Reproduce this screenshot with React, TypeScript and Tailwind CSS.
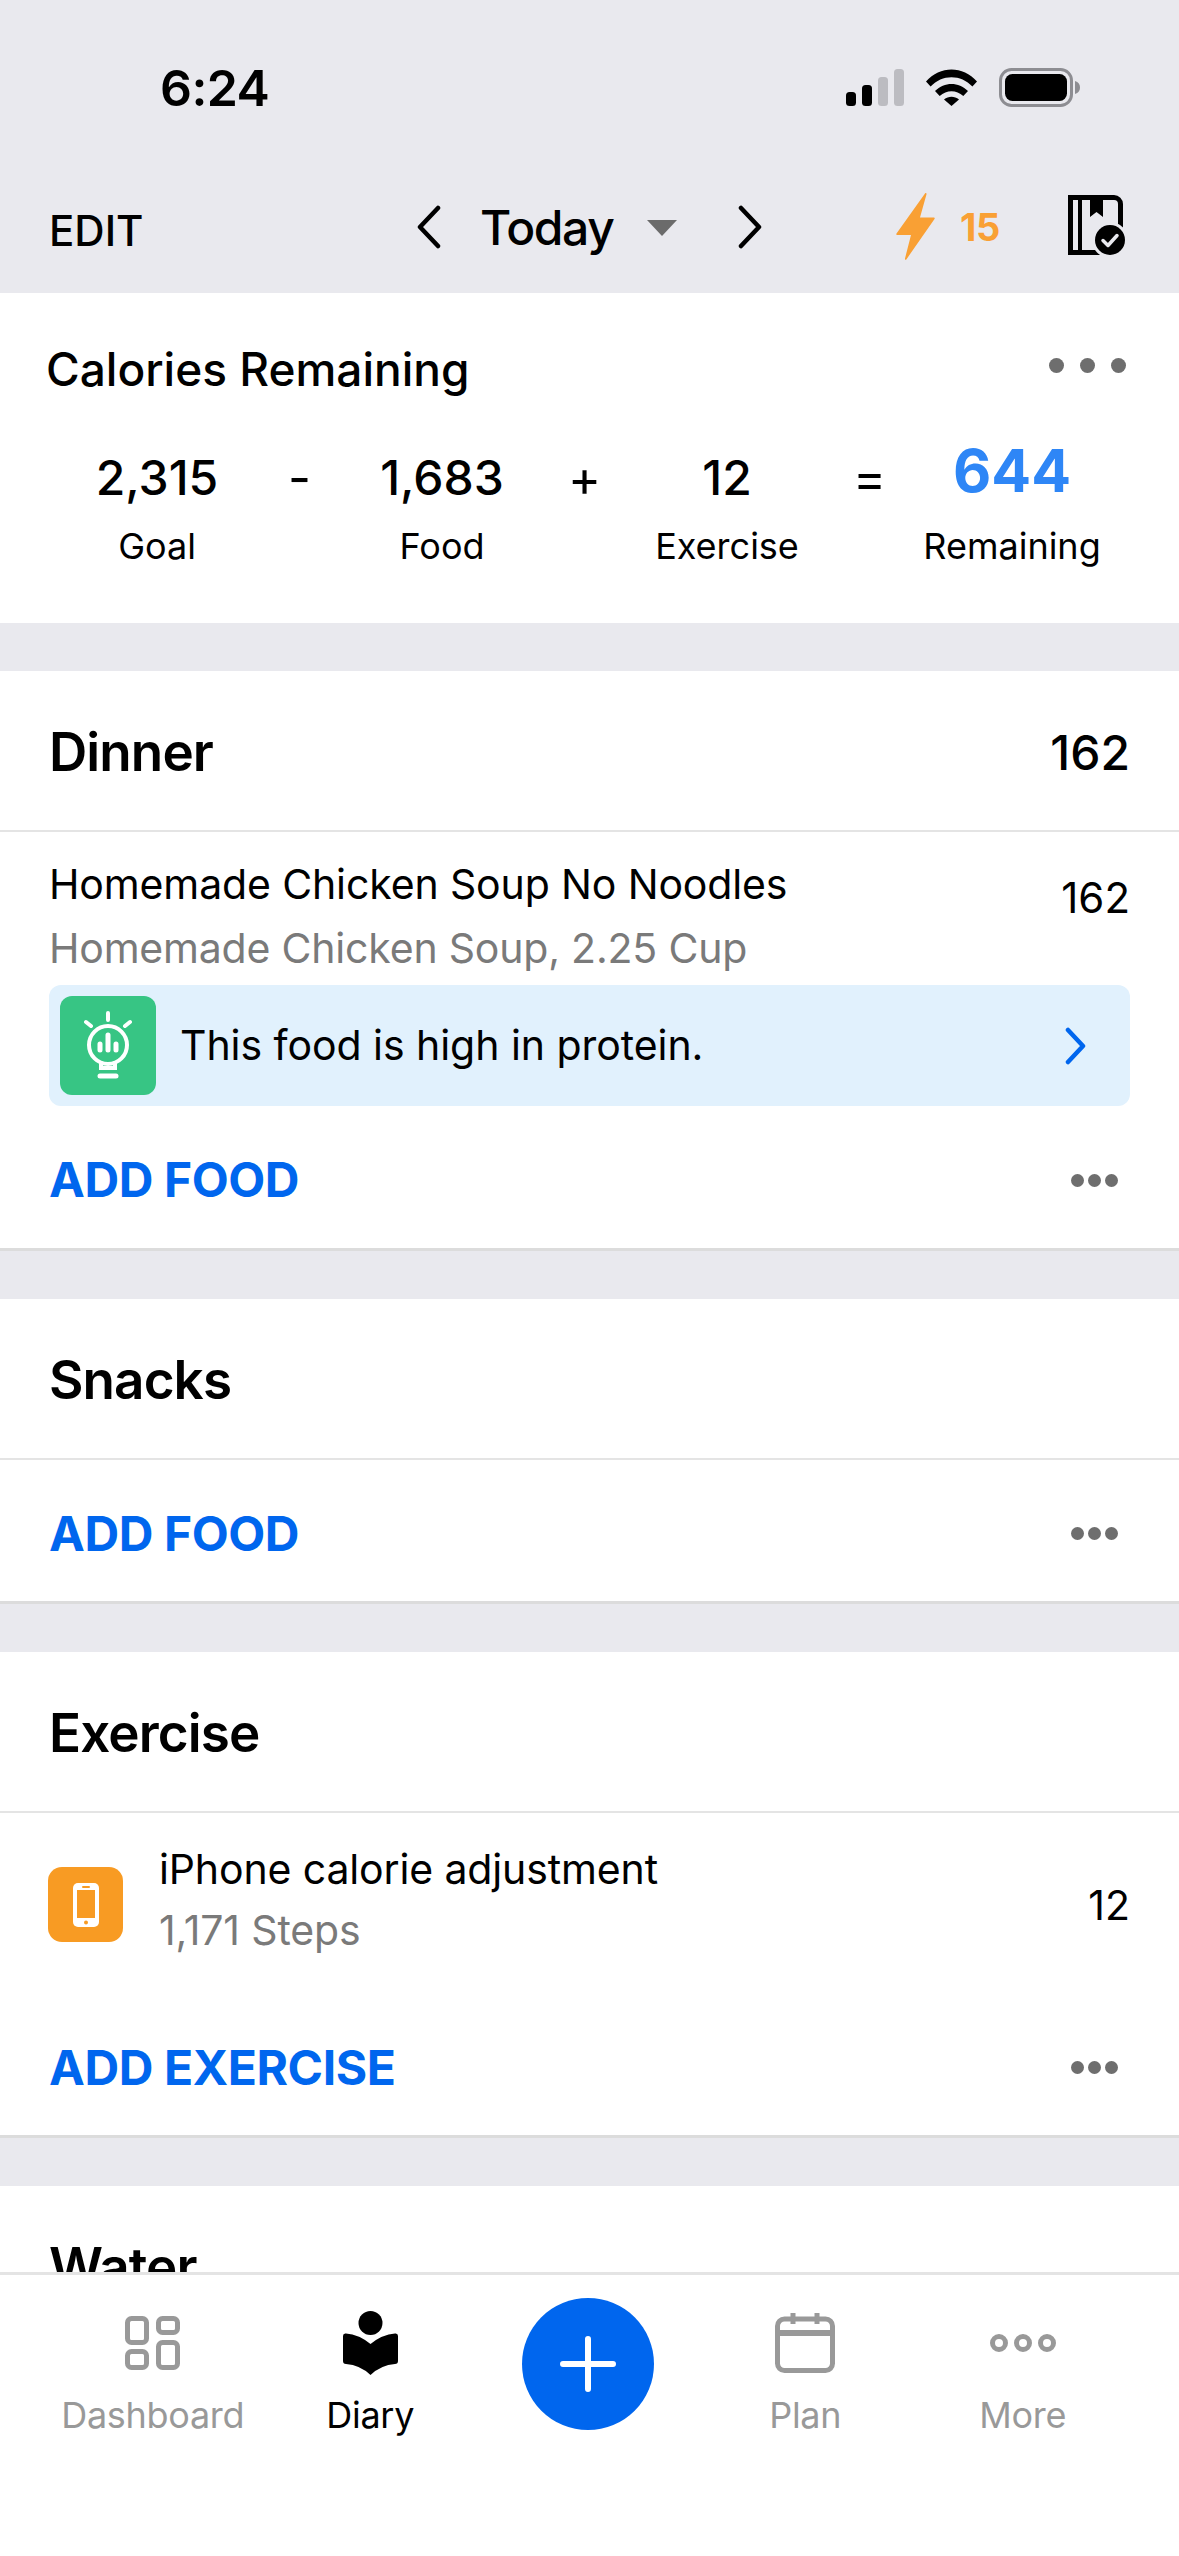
import React from "react";

const Dots = () => (
  <div className="flex items-center gap-[4px] mr-[12px]">
    <span className="w-[13px] h-[13px] rounded-full bg-[#6e6e6e]" />
    <span className="w-[13px] h-[13px] rounded-full bg-[#6e6e6e]" />
    <span className="w-[13px] h-[13px] rounded-full bg-[#6e6e6e]" />
  </div>
);

const SectionHeader = ({ title, value }: { title: string; value?: string }) => (
  <div className="h-[161px] flex items-center justify-between pl-[49px] pr-[49px] pt-[4px] border-b-2 border-[#e4e4e4]">
    <span className="text-[53px] font-semibold tracking-[-0.9px] text-black">{title}</span>
    {value && <span className="text-[48px] font-medium text-black">{value}</span>}
  </div>
);

const AddRow = ({ label }: { label: string }) => (
  <div className="h-[144px] flex items-center justify-between pl-[49px] pr-[49px] pt-[6px] border-b-[3px] border-[#dcdcdc]">
    <span className="text-[48px] font-bold tracking-[-0.4px] text-[#0066ee]">{label}</span>
    <Dots />
  </div>
);

const SectionGap = () => <div className="h-[48px] bg-[#e9e9ee]" />;

const Stat = ({ value, label, blue }: { value: string; label: string; blue?: boolean }) => (
  <div className="w-[200px] flex flex-col items-center">
    <div className="h-[76px] flex items-center">
      {blue ? (
        <span className="text-[59px] font-bold text-[#2e86f6] -mt-[14px]">{value}</span>
      ) : (
        <span className="text-[48px] font-medium text-black">{value}</span>
      )}
    </div>
    <span className="mt-[8px] text-[36px] leading-[44px] text-black">{label}</span>
  </div>
);

const Operator = ({ sign }: { sign: string }) => (
  <div className="w-[85px] h-[76px] flex items-center justify-center text-[50px] text-black">{sign}</div>
);

const TabItem = ({ label, active, icon }: { label: string; active?: boolean; icon: React.ReactNode }) => (
  <div className="w-[217.5px] flex flex-col items-center">
    <div className="h-[70px] flex items-center justify-center">{icon}</div>
    <span className={`mt-[15px] text-[36px] leading-[44px] tracking-[-0.3px] ${active ? "text-black" : "text-[#999999]"}`}>{label}</span>
  </div>
);

export default function App() {
  return (
    <div className="w-[1179px] h-[2556px] flex flex-col overflow-hidden bg-white [font-family:Inter,sans-serif]">
      {/* top bars */}
      <div className="h-[293px] bg-[#e9e9ee] shrink-0">
        <div className="h-[176px] flex items-start justify-between">
          <span className="ml-[160px] mt-[58px] text-[50px] leading-[60px] font-semibold tracking-[-0.6px] text-black">6:24</span>
          <div className="mt-[68px] mr-[98px] flex items-center gap-[22px]">
            <svg width="58" height="37" viewBox="0 0 58 37">
              <rect x="0" y="23" width="10" height="14" rx="3.5" fill="#000" />
              <rect x="16" y="16" width="10" height="21" rx="3.5" fill="#000" />
              <rect x="32" y="8" width="10" height="29" rx="3.5" fill="#bcbcc1" />
              <rect x="48" y="0" width="10" height="37" rx="3.5" fill="#bcbcc1" />
            </svg>
            <svg width="51" height="37" viewBox="0 0 51 37">
              <path d="M0 12.5C14-3.5 37-3.5 51 12.5l-4.6 5C35 5 16 5 4.6 17.500z" fill="#000" />
              <path d="M9 22c9.500-9.500 23.500-9.500 33 0l-4.700 5c-7-6.500-16.600-6.500-23.600 0z" fill="#000" />
              <path d="M18 30.500c4.500-3.800 10.500-3.800 15 0L25.500 37z" fill="#000" />
            </svg>
            <svg width="82" height="39" viewBox="0 0 82 39">
              <rect x="1.500" y="1.500" width="71" height="36" rx="11" fill="none" stroke="#8d8d92" strokeWidth="3" />
              <rect x="6" y="6" width="62" height="27" rx="7.500" fill="#000" />
              <path d="M76 13c3.500 1 5 3.500 5 6.500s-1.500 5.500-5 6.500z" fill="#8d8d92" />
            </svg>
          </div>
        </div>
        <div className="h-[117px] flex items-start">
          <span className="ml-[49px] mt-[30px] w-[367px] text-[42px] leading-[50px] font-medium text-black">EDIT</span>
          <svg className="mt-[29px]" width="25" height="44" viewBox="0 0 25 44" fill="none" stroke="#000" strokeWidth="4.500" strokeLinecap="round" strokeLinejoin="round">
            <path d="M22 3 4 22l18 19" />
          </svg>
          <span className="ml-[39px] mt-[23px] w-[133px] text-[48px] leading-[58px] font-medium tracking-[-1.4px] text-black">Today</span>
          <svg className="ml-[34px] mt-[44px]" width="30" height="16" viewBox="0 0 30 16">
            <path d="M0 0h30L15 16z" fill="#6b6b6b" />
          </svg>
          <svg className="ml-[61px] mt-[29px]" width="25" height="44" viewBox="0 0 25 44" fill="none" stroke="#000" strokeWidth="4.500" strokeLinecap="round" strokeLinejoin="round">
            <path d="M3 3l18 19L3 41" />
          </svg>
          <svg className="ml-[133px] mt-[17px]" width="39" height="67" viewBox="0 0 39 67">
            <path d="M29 0.500 0.500 40.500c-.6 1-.1 1.500 1 1.500H15L9 65.500c-.3 1.300.8 1.700 1.500.7L38.500 26c.6-1 .1-1.500-1-1.500H24L30.500 1.300c.3-1.200-.8-1.600-1.500-.8z" fill="#f9a034" />
          </svg>
          <span className="ml-[25px] mt-[29px] w-[39px] text-[38px] leading-[44px] font-bold tracking-[-0.4px] text-[#f9a034]">15</span>
          <svg className="ml-[69px] mt-[19px]" width="58" height="62" viewBox="0 0 58 62">
            <path d="M0 0h46a9 9 0 0 1 9 9v42H40v9H0z" fill="#000" />
            <rect x="5" y="5" width="5" height="50" fill="#e9e9ee" />
            <path d="M14 5h8v17l6.500-5 6.500 5V5h11a4 4 0 0 1 4 4v46H14z" fill="#e9e9ee" />
            <circle cx="42" cy="45" r="18" fill="#e9e9ee" />
            <circle cx="42" cy="45" r="15" fill="#000" />
            <path d="M35 45.500l5 5 9-10" fill="none" stroke="#e9e9ee" strokeWidth="3.500" strokeLinecap="round" strokeLinejoin="round" />
          </svg>
        </div>
      </div>

      {/* scrolling diary */}
      <div className="flex-1 overflow-hidden bg-[#e9e9ee]">
        <div className="h-[330px] bg-white">
          <div className="flex items-center justify-between pl-[46px] pr-[53px] pt-[46px]">
            <span className="text-[46px] leading-[60px] font-medium text-black">Calories Remaining</span>
            <div className="flex items-center gap-[16px] -mt-[8px]">
              <span className="w-[15px] h-[15px] rounded-full bg-[#6e6e6e]" />
              <span className="w-[15px] h-[15px] rounded-full bg-[#6e6e6e]" />
              <span className="w-[15px] h-[15px] rounded-full bg-[#6e6e6e]" />
            </div>
          </div>
          <div className="flex items-start pl-[57px] mt-[41px]">
            <Stat value="2,315" label="Goal" />
            <Operator sign="-" />
            <Stat value="1,683" label="Food" />
            <Operator sign="+" />
            <Stat value="12" label="Exercise" />
            <Operator sign="=" />
            <Stat value="644" label="Remaining" blue />
          </div>
        </div>
        <SectionGap />

        <div className="bg-white">
          <SectionHeader title="Dinner" value="162" />
          <div className="flex items-start justify-between pl-[49px] pr-[49px] h-[153px]">
            <div className="flex flex-col">
              <span className="mt-[27px] text-[41px] leading-[50px] tracking-[-0.13px] text-black">Homemade Chicken Soup No Noodles</span>
              <span className="mt-[14px] text-[41px] leading-[50px] tracking-[-0.2px] text-[#7a7a7a]">Homemade Chicken Soup, 2.25 Cup</span>
            </div>
            <span className="mt-[41px] text-[42px] leading-[50px] text-black">162</span>
          </div>
          <div className="mx-[49px] h-[121px] rounded-[12px] bg-[#e1f1fd] flex items-center pl-[11px] pr-[43px]">
            <div className="w-[96px] h-[99px] rounded-[12px] bg-[#37c584] flex items-center justify-center">
              <svg width="50" height="70" viewBox="0 0 50 70" fill="none" stroke="#fff" strokeWidth="4" strokeLinecap="round">
                <path d="M25 2v7M3 11l5 4M47 11l-5 4" />
                <circle cx="25" cy="34" r="19" />
                <path d="M18 52v5h14v-5" />
                <path d="M17 65h16" strokeWidth="5" />
                <path d="M25 24v15M17 33v6M33 33v6" strokeWidth="5" />
              </svg>
            </div>
            <span className="ml-[24px] flex-1 text-[41px] tracking-[-0.05px] text-black">This food is high in protein.</span>
            <svg width="24" height="38" viewBox="0 0 24 38" fill="none" stroke="#0066ee" strokeWidth="4.500" strokeLinecap="round" strokeLinejoin="round">
              <path d="M5 3l15 16L5 35" />
            </svg>
          </div>
          <div className="h-[145px] flex items-center justify-between pl-[49px] pr-[49px] pt-[6px] border-b-[3px] border-[#dcdcdc]">
            <span className="text-[48px] font-bold tracking-[-0.4px] text-[#0066ee]">ADD FOOD</span>
            <Dots />
          </div>
        </div>
        <SectionGap />

        <div className="bg-white">
          <SectionHeader title="Snacks" />
          <AddRow label="ADD FOOD" />
        </div>
        <SectionGap />

        <div className="bg-white">
          <SectionHeader title="Exercise" />
          <div className="h-[181px] flex items-start pl-[48px] pr-[49px]">
            <div className="mt-[54px] w-[75px] h-[75px] rounded-[14px] bg-[#f89b23] flex items-center justify-center">
              <svg width="26" height="44" viewBox="0 0 26 44">
                <rect x="0" y="0" width="26" height="44" rx="5" fill="#fff" />
                <rect x="4" y="7" width="18" height="28" fill="#f89b23" />
                <rect x="9" y="3" width="8" height="2" rx="1" fill="#f89b23" />
                <circle cx="13" cy="39.500" r="2" fill="#f89b23" />
              </svg>
            </div>
            <div className="ml-[36px] flex-1 flex flex-col">
              <span className="mt-[31px] text-[41px] leading-[50px] tracking-[-0.13px] text-black">iPhone calorie adjustment</span>
              <span className="mt-[11px] text-[41px] leading-[50px] tracking-[-0.13px] text-[#7a7a7a]">1,171 Steps</span>
            </div>
            <span className="mt-[67px] text-[41px] leading-[50px] text-black">12</span>
          </div>
          <AddRow label="ADD EXERCISE" />
        </div>
        <SectionGap />

        <div className="bg-white">
          <SectionHeader title="Water" />
        </div>
      </div>

      {/* tab bar */}
      <div className="h-[284px] shrink-0 bg-white border-t-[3px] border-[#e4e4e4] flex items-start pl-[44px] pt-[33px]">
        <TabItem
          label="Dashboard"
          icon={
            <svg width="55" height="54" viewBox="0 0 55 54" fill="none" stroke="#999" strokeWidth="5">
              <rect x="2.500" y="2.500" width="19" height="24" rx="4" />
              <rect x="33.500" y="2.500" width="19" height="14" rx="4" />
              <rect x="2.500" y="35.500" width="19" height="16" rx="4" />
              <rect x="33.500" y="26.500" width="19" height="25" rx="4" />
            </svg>
          }
        />
        <TabItem
          label="Diary"
          active
          icon={
            <svg width="55" height="64" viewBox="0 0 55 64">
              <circle cx="27.500" cy="12" r="12" fill="#000" />
              <path d="M0 25q0-3 3-2.500 13 1 24.500 10.500Q39 23.500 52 22.500q3-.5 3 2.500v25q0 3-3 3-14 1-24.500 11Q17 54 3 53q-3 0-3-3z" fill="#000" />
            </svg>
          }
        />
        <div className="w-[217.500px] flex justify-center -mt-[10px]">
          <div className="w-[132px] h-[132px] rounded-full bg-[#0066ee] flex items-center justify-center">
            <svg width="56" height="56" viewBox="0 0 56 56" stroke="#fff" strokeWidth="6" strokeLinecap="round">
              <path d="M28 3v50M3 28h50" />
            </svg>
          </div>
        </div>
        <TabItem
          label="Plan"
          icon={
            <svg width="60" height="60" viewBox="0 0 60 60" fill="none" stroke="#999" strokeWidth="5">
              <rect x="2.500" y="6" width="55" height="51.500" rx="7" />
              <path d="M2.500 20h55" strokeWidth="6" />
              <path d="M18 0v11M42 0v11" />
            </svg>
          }
        />
        <TabItem
          label="More"
          icon={
            <svg width="66" height="18" viewBox="0 0 66 18" fill="none" stroke="#999" strokeWidth="5">
              <circle cx="9" cy="9" r="6.500" />
              <circle cx="33" cy="9" r="6.500" />
              <circle cx="57" cy="9" r="6.500" />
            </svg>
          }
        />
      </div>
    </div>
  );
}
